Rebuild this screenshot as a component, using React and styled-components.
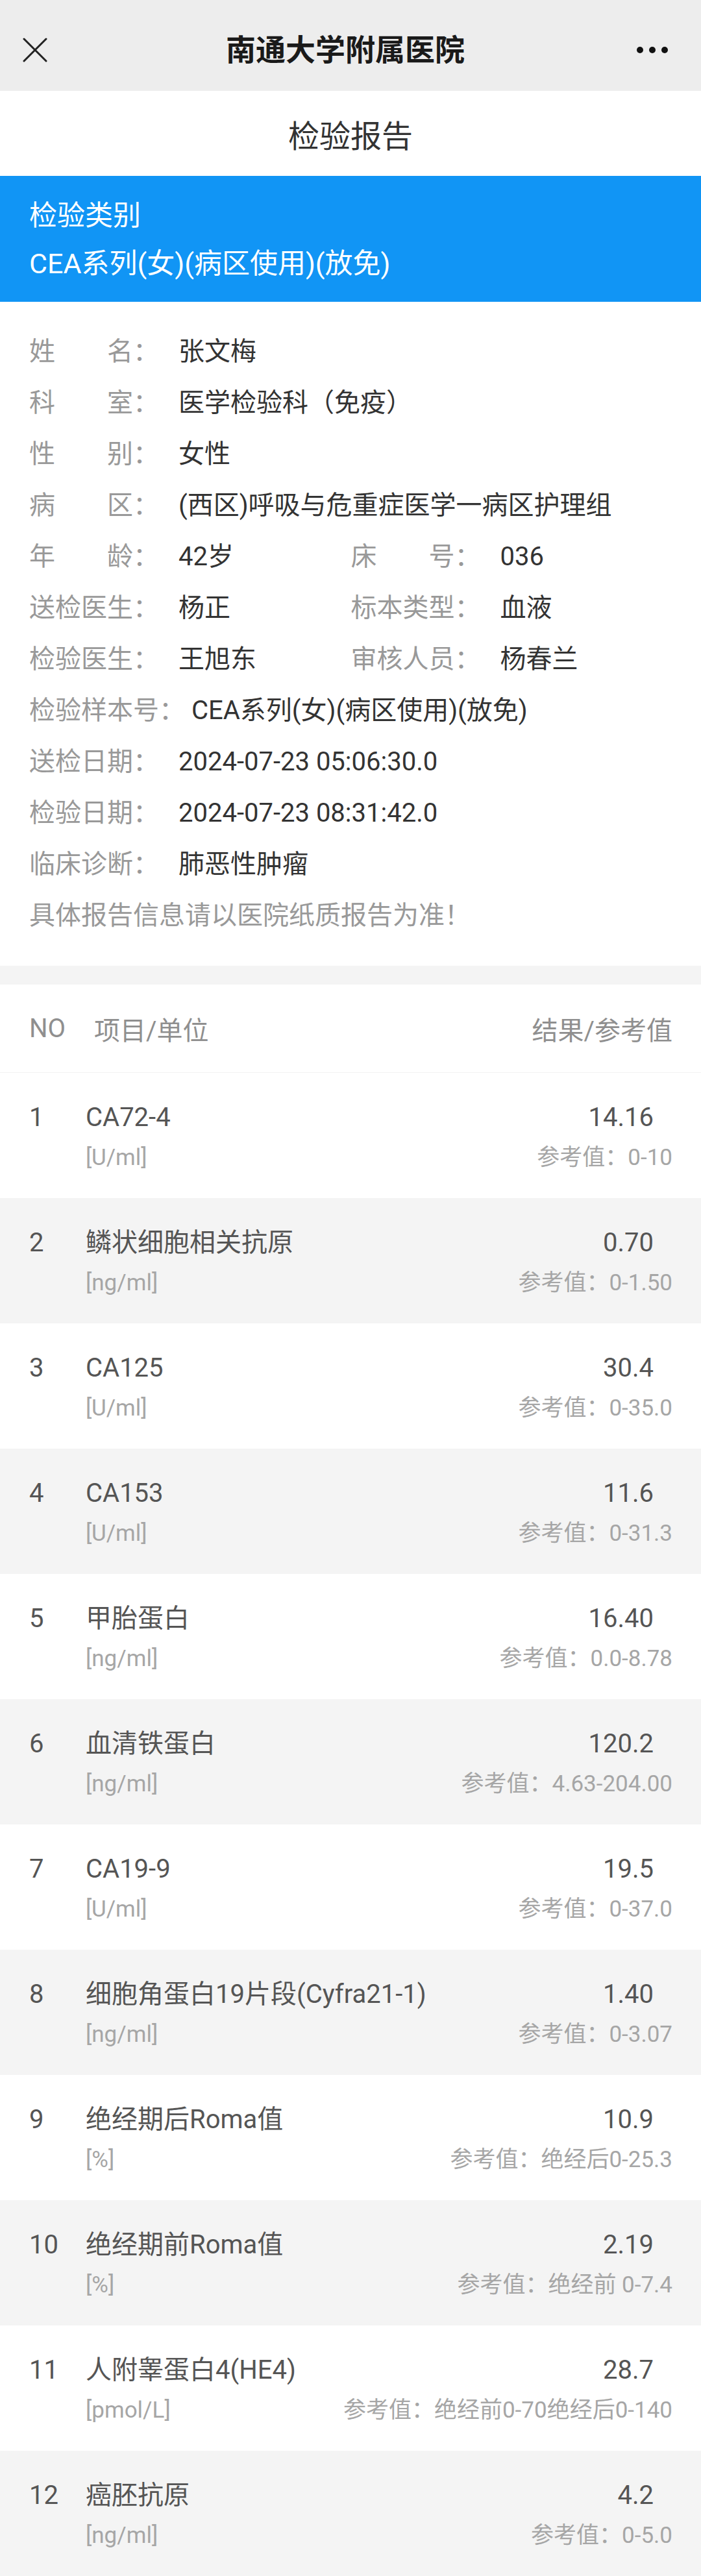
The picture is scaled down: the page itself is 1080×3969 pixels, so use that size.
import React from "react"
import styled, { createGlobalStyle } from "styled-components"

const GlobalStyle = createGlobalStyle`
  html, body {
    margin: 0;
    padding: 0;
    background: #fff;
  }
  body {
    font-family: Roboto, "Noto Sans CJK SC", sans-serif;
    -webkit-font-smoothing: antialiased;
  }
  * {
    box-sizing: border-box;
  }
`

const Page = styled.div`
  width: 1080px;
  background: #fff;
`

const NavBar = styled.header`
  height: 140px;
  background: #ededed;
  display: grid;
  grid-template-columns: 1fr auto 1fr;
  align-items: center;
  padding: 14px 51px 0 35px;
`

const NavTitle = styled.h1`
  margin: 0;
  font-size: 46px;
  font-weight: 700;
  color: #1a1a1a;
  line-height: 60px;
`

const NavButton = styled.div`
  display: flex;
  align-items: center;
  justify-self: ${p => (p.right ? "end" : "start")};
`

const PageTitle = styled.h2`
  margin: 0;
  height: 131px;
  display: flex;
  align-items: center;
  justify-content: center;
  font-size: 48px;
  font-weight: 400;
  color: #333;
`

const Banner = styled.section`
  height: 194px;
  background: #1195f5;
  color: #fff;
  padding: 24px 45px 0;
  font-size: 43px;
  line-height: 74px;
`

const InfoGrid = styled.section`
  display: grid;
  grid-template-columns: 1fr 1fr;
  grid-auto-rows: 79px;
  padding: 37px 44px 38px 45px;
  font-size: 40px;
  line-height: 79px;
  height: 1023px;
`

const Field = styled.div`
  display: flex;
  white-space: nowrap;
  grid-column: ${p => (p.full ? "span 2" : "span 1")};
`

const KeyBox = styled.span`
  display: flex;
  flex: none;
  min-width: 220px;
  color: #999;
`

const Key = styled.span`
  display: inline-block;
  width: ${p => (p.wide ? "auto" : "160px")};
  text-align-last: justify;
`

const Val = styled.span`
  margin-left: 10px;
  color: #333;
`

const Notice = styled.div`
  grid-column: span 2;
  color: #999;
`

const Gap = styled.div`
  height: 29px;
  background: #f4f4f4;
`

const TableHead = styled.div`
  height: 136px;
  display: flex;
  align-items: center;
  padding: 0 44px 0 45px;
  border-bottom: 1px solid #f2f2f2;
  font-size: 40px;
  color: #8f8f8f;
`

const HeadNo = styled.span`
  width: 100px;
`

const HeadSpacer = styled.span`
  flex: 1;
`

const ResultRow = styled.div`
  height: 193px;
  display: grid;
  grid-template-columns: 87px 1fr auto;
  grid-template-rows: 60px 64px;
  padding: 39px 44px 0 45px;
  background: ${p => (p.shaded ? "#f4f4f4" : "#fff")};
  white-space: nowrap;
`

const Cell = styled.span`
  font-size: ${p => (p.small ? "35px" : "40px")};
  line-height: ${p => (p.small ? "64px" : "60px")};
  color: ${p => (p.small ? "#a6a6a6" : "#555")};
  text-align: ${p => (p.end ? "right" : "left")};
  margin-right: ${p => (p.indent ? "29px" : "0")};
`

const CloseIcon = () => (
  <svg width="38" height="38" viewBox="0 0 38 38">
    <path d="M2 2 L36 36 M36 2 L2 36" stroke="#222" strokeWidth="3" strokeLinecap="round" />
  </svg>
)

const MoreIcon = () => (
  <svg width="48" height="12" viewBox="0 0 48 12">
    <circle cx="5" cy="6" r="5" fill="#111" />
    <circle cx="24" cy="6" r="5" fill="#111" />
    <circle cx="43" cy="6" r="5" fill="#111" />
  </svg>
)

const info = [
  [{ k: "姓名", v: "张文梅" }],
  [{ k: "科室", v: "医学检验科（免疫）" }],
  [{ k: "性别", v: "女性" }],
  [{ k: "病区", v: "(西区)呼吸与危重症医学一病区护理组" }],
  [{ k: "年龄", v: "42岁" }, { k: "床号", v: "036" }],
  [{ k: "送检医生", v: "杨正" }, { k: "标本类型", v: "血液" }],
  [{ k: "检验医生", v: "王旭东" }, { k: "审核人员", v: "杨春兰" }],
  [{ k: "检验样本号", v: "CEA系列(女)(病区使用)(放免)", wide: true }],
  [{ k: "送检日期", v: "2024-07-23 05:06:30.0" }],
  [{ k: "检验日期", v: "2024-07-23 08:31:42.0" }],
  [{ k: "临床诊断", v: "肺恶性肿瘤" }],
]

const results = [
  ["CA72-4", "[U/ml]", "14.16", "0-10"],
  ["鳞状细胞相关抗原", "[ng/ml]", "0.70", "0-1.50"],
  ["CA125", "[U/ml]", "30.4", "0-35.0"],
  ["CA153", "[U/ml]", "11.6", "0-31.3"],
  ["甲胎蛋白", "[ng/ml]", "16.40", "0.0-8.78"],
  ["血清铁蛋白", "[ng/ml]", "120.2", "4.63-204.00"],
  ["CA19-9", "[U/ml]", "19.5", "0-37.0"],
  ["细胞角蛋白19片段(Cyfra21-1)", "[ng/ml]", "1.40", "0-3.07"],
  ["绝经期后Roma值", "[%]", "10.9", "绝经后0-25.3"],
  ["绝经期前Roma值", "[%]", "2.19", "绝经前 0-7.4"],
  ["人附睾蛋白4(HE4)", "[pmol/L]", "28.7", "绝经前0-70绝经后0-140"],
  ["癌胚抗原", "[ng/ml]", "4.2", "0-5.0"],
]

export default function App() {
  return (
    <Page>
      <GlobalStyle />
      <NavBar>
        <NavButton>
          <CloseIcon />
        </NavButton>
        <NavTitle>南通大学附属医院</NavTitle>
        <NavButton right>
          <MoreIcon />
        </NavButton>
      </NavBar>

      <PageTitle>检验报告</PageTitle>

      <Banner>
        <div>检验类别</div>
        <div>CEA系列(女)(病区使用)(放免)</div>
      </Banner>

      <InfoGrid>
        {info.map((row, i) =>
          row.map(item => (
            <Field key={i + item.k} full={row.length === 1}>
              <KeyBox>
                <Key wide={item.wide}>{item.k}</Key>：
              </KeyBox>
              <Val>{item.v}</Val>
            </Field>
          ))
        )}
        <Notice>具体报告信息请以医院纸质报告为准！</Notice>
      </InfoGrid>

      <Gap />

      <TableHead>
        <HeadNo>NO</HeadNo>
        <span>项目/单位</span>
        <HeadSpacer />
        <span>结果/参考值</span>
      </TableHead>

      {results.map(([name, unit, value, ref], i) => (
        <ResultRow key={name} shaded={i % 2 === 1}>
          <Cell>{i + 1}</Cell>
          <Cell>{name}</Cell>
          <Cell end indent>{value}</Cell>
          <span />
          <Cell small>{unit}</Cell>
          <Cell small end>参考值：{ref}</Cell>
        </ResultRow>
      ))}
    </Page>
  )
}
